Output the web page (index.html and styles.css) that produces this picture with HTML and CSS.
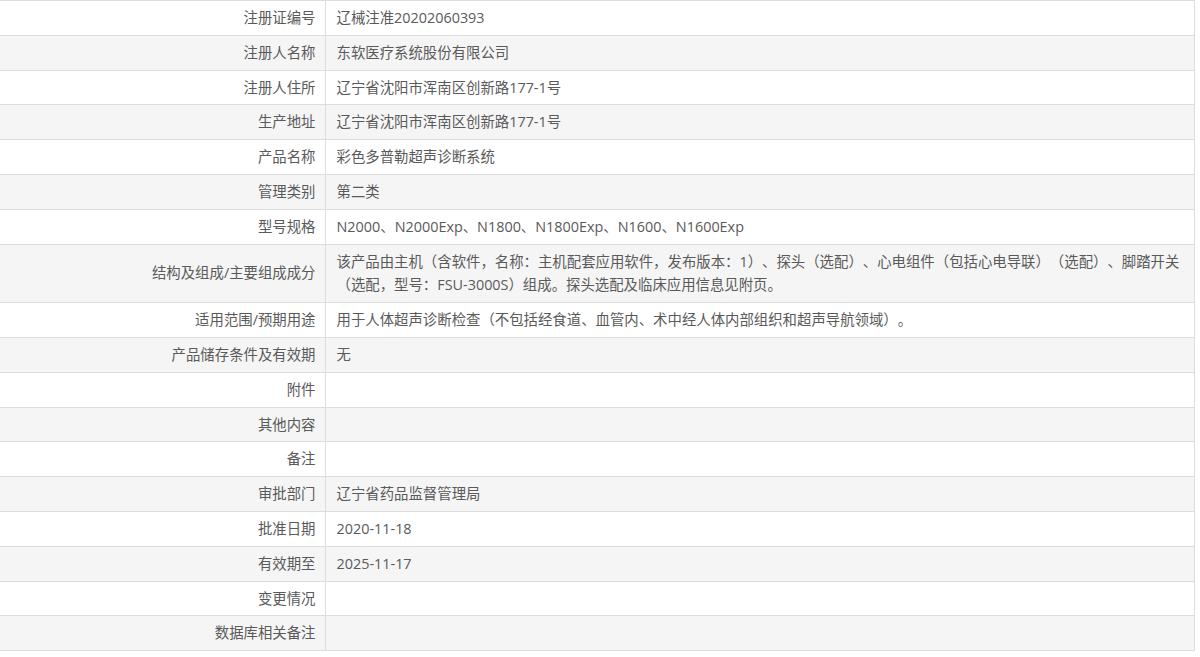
FILE: index.html
```html
<!DOCTYPE html>
<html lang="zh-CN">
<head>
<meta charset="utf-8">
<title>注册证信息</title>
<link rel="stylesheet" href="styles.css">
</head>
<body>
<table class="info">
  <colgroup><col class="col-label"><col class="col-value"></colgroup>
  <tbody>
    <tr><td class="label">注册证编号</td><td class="value">辽械注准20202060393</td></tr>
    <tr><td class="label">注册人名称</td><td class="value">东软医疗系统股份有限公司</td></tr>
    <tr><td class="label">注册人住所</td><td class="value">辽宁省沈阳市浑南区创新路177-1号</td></tr>
    <tr><td class="label">生产地址</td><td class="value">辽宁省沈阳市浑南区创新路177-1号</td></tr>
    <tr><td class="label">产品名称</td><td class="value">彩色多普勒超声诊断系统</td></tr>
    <tr><td class="label">管理类别</td><td class="value">第二类</td></tr>
    <tr><td class="label">型号规格</td><td class="value">N2000、N2000Exp、N1800、N1800Exp、N1600、N1600Exp</td></tr>
    <tr><td class="label">结构及组成/主要组成成分</td><td class="value">该产品由主机（含软件，名称：主机配套应用软件，发布版本：1）、探头（选配）、心电组件（包括心电导联）（选配）、脚踏开关（选配，型号：FSU-3000S）组成。探头选配及临床应用信息见附页。</td></tr>
    <tr><td class="label">适用范围/预期用途</td><td class="value">用于人体超声诊断检查（不包括经食道、血管内、术中经人体内部组织和超声导航领域）。</td></tr>
    <tr><td class="label">产品储存条件及有效期</td><td class="value">无</td></tr>
    <tr><td class="label">附件</td><td class="value"></td></tr>
    <tr><td class="label">其他内容</td><td class="value"></td></tr>
    <tr><td class="label">备注</td><td class="value"></td></tr>
    <tr><td class="label">审批部门</td><td class="value">辽宁省药品监督管理局</td></tr>
    <tr><td class="label">批准日期</td><td class="value">2020-11-18</td></tr>
    <tr><td class="label">有效期至</td><td class="value">2025-11-17</td></tr>
    <tr><td class="label">变更情况</td><td class="value"></td></tr>
    <tr><td class="label">数据库相关备注</td><td class="value"></td></tr>
  </tbody>
</table>
</body>
</html>
```

FILE: styles.css
```css
html, body {
  margin: 0;
  padding: 0;
  background: #ffffff;
}

body {
  font-family: "Open Sans", "Noto Sans CJK SC", sans-serif;
  font-size: 14.4px;
  color: #5a5a5a;
  text-spacing-trim: space-all;
}

.info {
  width: 1195px;
  border-collapse: collapse;
  table-layout: fixed;
  border-top: 1px solid #dddddd;
  border-right: 1px solid #dddddd;
  border-bottom: 1px solid #dddddd;
}

.col-label {
  width: 325px;
}

.info tr:nth-child(even) {
  background: #f5f5f5;
}

.info td {
  border-top: 1px solid #dddddd;
  border-bottom: 1px solid #dddddd;
  padding: 5px 5px 5px 11px;
  line-height: 23.8px;
  vertical-align: middle;
}

.info td.label {
  text-align: right;
  padding-right: 9px;
  border-right: 1px solid #dddddd;
}

.info td.value {
  text-align: left;
}
```
